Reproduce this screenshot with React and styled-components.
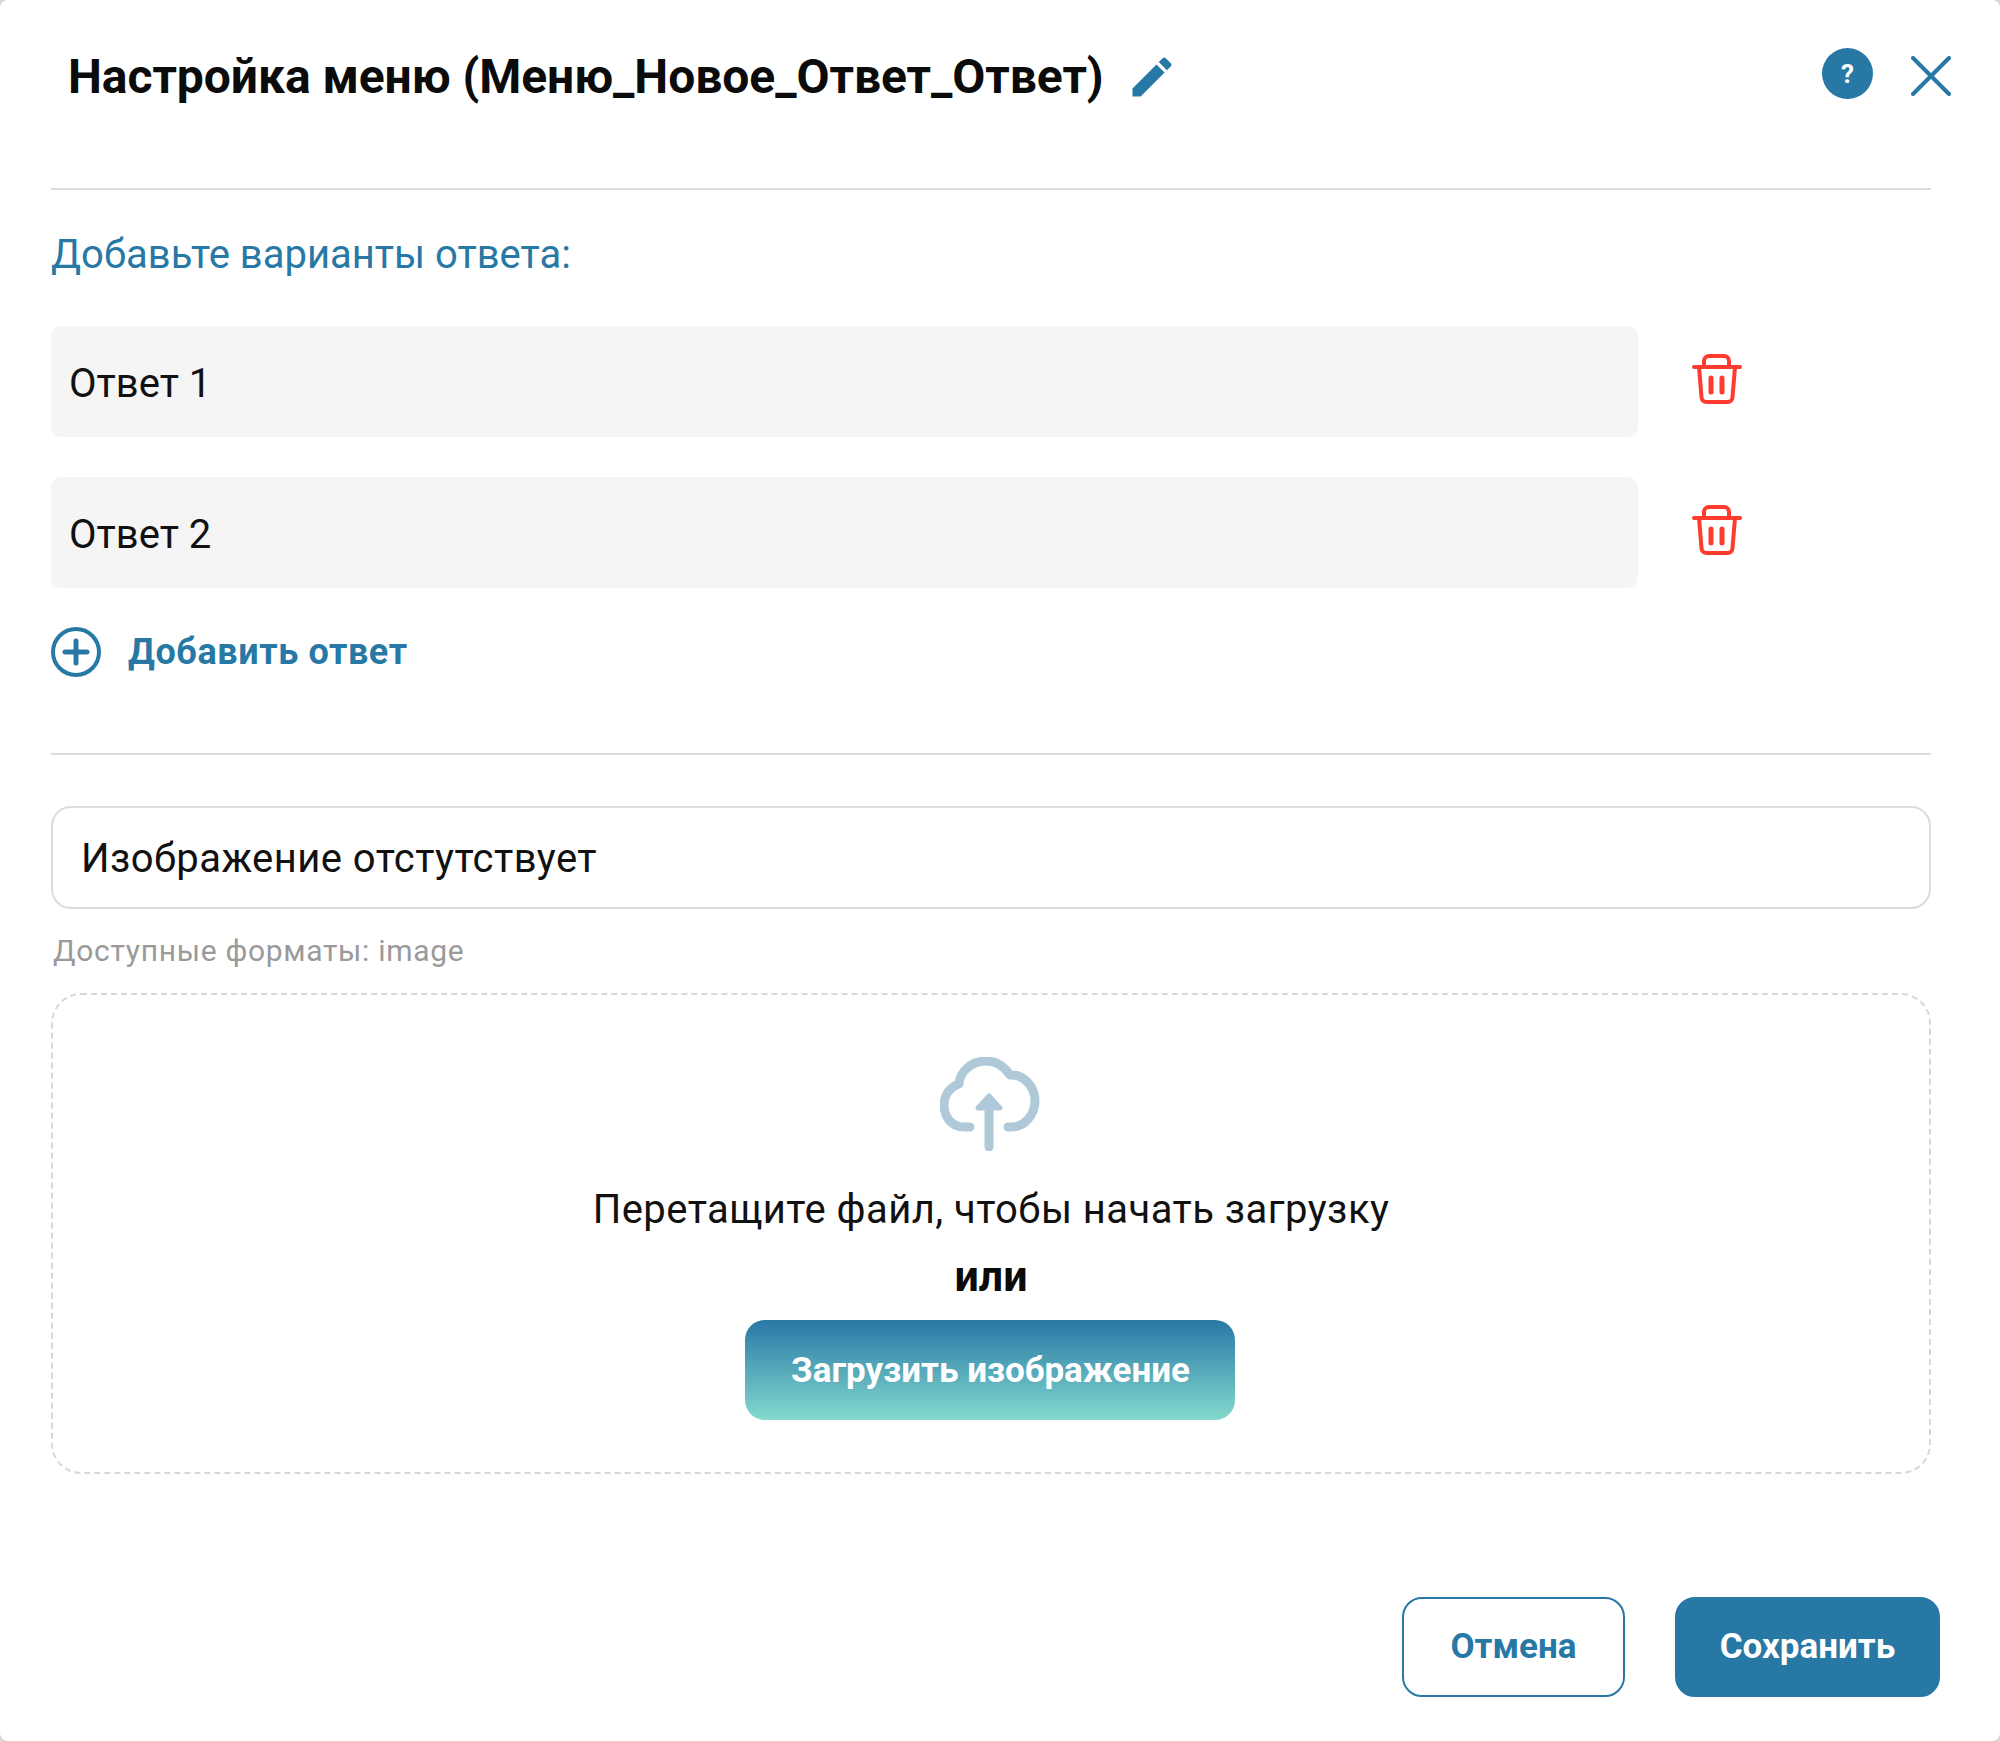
import React from "react";
import styled, { createGlobalStyle } from "styled-components";

const Global = createGlobalStyle`
  html, body { margin: 0; padding: 0; background: #d8d8d8; }
  * { box-sizing: border-box; }
`;

const blue = "#2878a5";

const Modal = styled.div`
  width: 2000px;
  height: 1741px;
  padding: 0 69px 0 51px;
  border-radius: 8px;
  font-family: Roboto, "Noto Sans", sans-serif;
  color: #111;
  background: #fff;
`;

const Header = styled.header`
  height: 188px;
  padding-top: 46px;
  padding-left: 17px;
  margin-right: -20px;
  display: flex;
  align-items: flex-start;
`;

const Title = styled.h1`
  margin: 0;
  font-size: 48px;
  line-height: 62px;
  font-weight: 700;
  letter-spacing: -0.06px;
  color: #0b0b0b;
`;

const EditIcon = styled.svg`
  width: 52px;
  height: 52px;
  margin-left: 22px;
  margin-top: 5px;
  fill: ${blue};
`;

const HeaderActions = styled.div`
  margin-left: auto;
  padding-top: 2px;
  display: flex;
  align-items: flex-start;
  gap: 38px;
`;

const HelpBadge = styled.div`
  width: 51px;
  height: 51px;
  border-radius: 50%;
  background: ${blue};
  color: #fff;
  font-size: 26px;
  font-weight: 700;
  display: flex;
  align-items: center;
  justify-content: center;
`;

const CloseIcon = styled.svg`
  width: 40px;
  height: 40px;
  margin-top: 8px;
  stroke: ${blue};
  stroke-width: 4;
  stroke-linecap: round;
  fill: none;
`;

const Rule = styled.hr`
  margin: 0;
  border: 0;
  height: 2px;
  background: #dcdcdc;
`;

const SectionLabel = styled.div`
  margin-top: 40px;
  margin-bottom: 46px;
  font-size: 40px;
  line-height: 50px;
  color: ${blue};
`;

const AnswerRow = styled.div`
  display: flex;
  align-items: center;
  gap: 54px;
  margin-bottom: 40px;
`;

const AnswerInput = styled.div`
  width: 1587px;
  height: 111px;
  padding: 3px 0 0 18px;
  border-radius: 10px;
  background: #f5f5f5;
  font-size: 40px;
  display: flex;
  align-items: center;
`;

const TrashIcon = styled.svg`
  width: 50px;
  height: 50px;
  margin-top: -6px;
  stroke: #ff3b30;
  stroke-width: 4;
  stroke-linecap: round;
  stroke-linejoin: round;
  fill: none;
`;

const AddRow = styled.div`
  display: flex;
  align-items: center;
  gap: 27px;
  height: 50px;
  margin-top: -1px;
  margin-bottom: 76px;
`;

const PlusIcon = styled.svg`
  width: 50px;
  height: 50px;
  stroke: ${blue};
  stroke-width: 4;
  stroke-linecap: round;
  fill: none;
`;

const AddLabel = styled.span`
  font-size: 36px;
  font-weight: 700;
  letter-spacing: 0.6px;
  color: ${blue};
`;

const FileField = styled.div`
  margin-top: 51px;
  height: 103px;
  padding: 2px 0 0 28px;
  border: 2px solid #dcdcdc;
  border-radius: 20px;
  font-size: 40px;
  letter-spacing: 0.45px;
  display: flex;
  align-items: center;
`;

const Hint = styled.div`
  margin-top: 25px;
  padding-left: 2px;
  font-size: 30px;
  line-height: 34px;
  letter-spacing: 0.7px;
  color: #9a9a9a;
`;

const DropZone = styled.div`
  margin-top: 25px;
  height: 481px;
  padding-top: 62px;
  border: 2px dashed #d8d8d8;
  border-radius: 30px;
  display: flex;
  flex-direction: column;
  align-items: center;
`;

const CloudIcon = styled.svg`
  width: 100px;
  height: 94px;
  margin-right: 2px;
  stroke: #afc9d9;
  stroke-width: 9;
  stroke-linecap: round;
  stroke-linejoin: round;
  fill: none;
`;

const DropText = styled.div`
  margin-top: 34px;
  font-size: 40px;
  line-height: 50px;
  letter-spacing: 0.45px;
`;

const DropOr = styled.div`
  margin-top: 16px;
  font-size: 43px;
  line-height: 50px;
  font-weight: 700;
  color: #0b0b0b;
`;

const UploadButton = styled.div`
  margin-top: 19px;
  margin-right: 3px;
  padding-left: 2px;
  width: 490px;
  height: 100px;
  border-radius: 20px;
  background: linear-gradient(180deg, #2878a5 0%, #84d9cd 100%);
  color: #fff;
  font-size: 35px;
  font-weight: 700;
  display: flex;
  align-items: center;
  justify-content: center;
`;

const Footer = styled.footer`
  margin-top: 123px;
  margin-right: -9px;
  display: flex;
  justify-content: flex-end;
  gap: 50px;
`;

const FooterButton = styled.div`
  width: ${(p) => (p.$primary ? "265px" : "223px")};
  height: 100px;
  padding-bottom: 2px;
  border-radius: 20px;
  border: 2px solid ${blue};
  background: ${(p) => (p.$primary ? blue : "#fff")};
  color: ${(p) => (p.$primary ? "#fff" : blue)};
  font-size: 35px;
  font-weight: 700;
  display: flex;
  align-items: center;
  justify-content: center;
`;

const Trash = () => (
  <TrashIcon viewBox="0 0 50 50">
    <path d="M2 13H48" />
    <path d="M12 13V7a5 5 0 0 1 5-5H32a5 5 0 0 1 5 5V13" />
    <path d="M7 13l2.5 30a5 5 0 0 0 5 5H35.5a5 5 0 0 0 5-5L43 13" />
    <path d="M19 24V38M30 24V38" strokeWidth="5" />
  </TrashIcon>
);

export default function App() {
  return (
    <Modal>
      <Global />
      <Header>
        <Title>Настройка меню (Меню_Новое_Ответ_Ответ)</Title>
        <EditIcon viewBox="0 0 24 24">
          <path d="M3 17.25V21h3.75L17.81 9.94l-3.75-3.75L3 17.25zM20.71 7.04c.39-.39.39-1.02 0-1.41l-2.34-2.34c-.39-.39-1.02-.39-1.41 0l-1.83 1.83 3.75 3.75 1.83-1.83z" />
        </EditIcon>
        <HeaderActions>
          <HelpBadge>?</HelpBadge>
          <CloseIcon viewBox="0 0 40 40">
            <path d="M2 2L38 38M38 2L2 38" />
          </CloseIcon>
        </HeaderActions>
      </Header>
      <Rule />
      <SectionLabel>Добавьте варианты ответа:</SectionLabel>
      <AnswerRow>
        <AnswerInput>Ответ 1</AnswerInput>
        <Trash />
      </AnswerRow>
      <AnswerRow>
        <AnswerInput>Ответ 2</AnswerInput>
        <Trash />
      </AnswerRow>
      <AddRow>
        <PlusIcon viewBox="0 0 50 50">
          <circle cx="25" cy="25" r="23" />
          <path d="M25 14V36M14 25H36" strokeWidth="5" />
        </PlusIcon>
        <AddLabel>Добавить ответ</AddLabel>
      </AddRow>
      <Rule />
      <FileField>Изображение отстутствует</FileField>
      <Hint>Доступные форматы: image</Hint>
      <DropZone>
        <CloudIcon viewBox="0 0 100 94">
          <path d="M30 70H24C10 70 4 58 4 48C4 38 10 30 19 27C20 14 32 4 46 4C56 4 64 9 70 18C84 17 95 30 95 44C95 58 84 70 72 70H68" />
          <path d="M49 44V90" />
          <path d="M49 39L38 51H60Z" fill="#afc9d9" strokeWidth="5" />
        </CloudIcon>
        <DropText>Перетащите файл, чтобы начать загрузку</DropText>
        <DropOr>или</DropOr>
        <UploadButton>Загрузить изображение</UploadButton>
      </DropZone>
      <Footer>
        <FooterButton>Отмена</FooterButton>
        <FooterButton $primary>Сохранить</FooterButton>
      </Footer>
    </Modal>
  );
}
